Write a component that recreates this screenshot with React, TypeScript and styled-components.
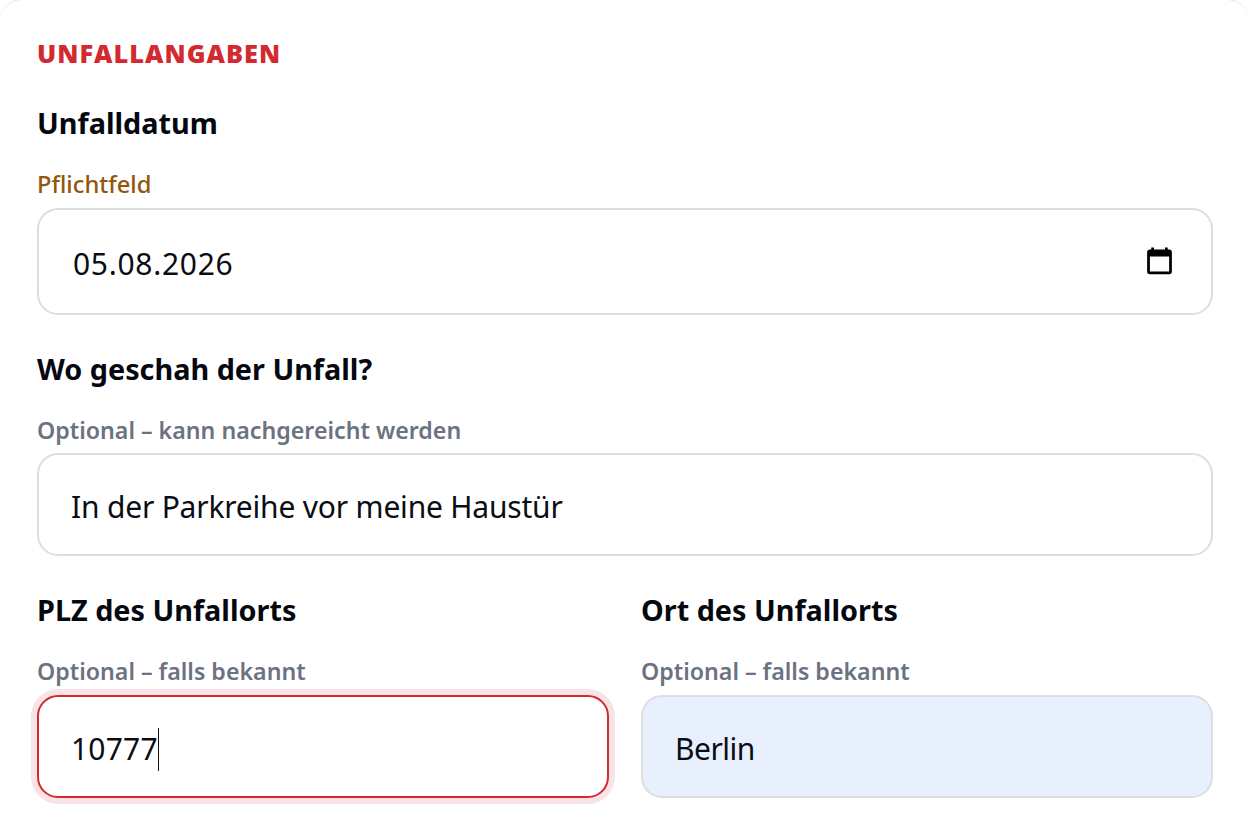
import React from "react";
import styled, { createGlobalStyle } from "styled-components";

const Global = createGlobalStyle`
  html, body { margin: 0; padding: 0; background: #fff; height: 817px; overflow: hidden; }
  body { font-family: "Noto Sans", "Open Sans", sans-serif; color: #000; }
`;

const Page = styled.div`
  height: 817px;
  overflow: hidden;
`;

const Card = styled.form`
  box-sizing: border-box;
  width: 1249px;
  margin-top: -1px;
  padding: 39px 36px 0 37px;
  background: #fff;
  border-top: 1px solid #e6e6e6;
  border-radius: 22px;
  display: flex;
  flex-direction: column;
`;

const Title = styled.h2`
  margin: 0;
  font-size: 25.4px;
  line-height: 28px;
  font-weight: 800;
  letter-spacing: 1px;
  color: #d32a2f;
  text-transform: uppercase;
  font-family: "Open Sans", sans-serif;
`;

const Field = styled.div<{ $top: number }>`
  display: flex;
  flex-direction: column;
  min-width: 0;
  margin-top: ${(p) => p.$top}px;
`;

const Label = styled.label`
  font-size: 28.8px;
  line-height: 36px;
  font-weight: 700;
  color: #05080f;
`;

const Hint = styled.span<{ $tone?: "required" | "optional"; $gap: number }>`
  margin-top: 29px;
  margin-bottom: ${(p) => p.$gap}px;
  font-size: ${(p) => (p.$tone === "required" ? 23.7 : 23.2)}px;
  line-height: 28px;
  font-weight: ${(p) => (p.$tone === "required" ? 500 : 600)};
  color: ${(p) => (p.$tone === "required" ? "#92570c" : "#6b7280")};
`;

const Box = styled.div<{ $h: number; $state?: "focus" | "autofill" }>`
  box-sizing: border-box;
  height: ${(p) => p.$h}px;
  padding: 5px 32px 0;
  display: flex;
  align-items: center;
  justify-content: space-between;
  border-radius: 21px;
  border: 2px solid ${(p) => (p.$state === "focus" ? "#d32a2f" : "#dcdee2")};
  background: ${(p) => (p.$state === "autofill" ? "#e8f0fe" : "#fff")};
  box-shadow: ${(p) => (p.$state === "focus" ? "0 0 0 6px #f8e4e5" : "none")};
  font-size: 30px;
  line-height: 40px;
  color: #0a0d14;
`;

const Value = styled.span<{ $kind?: "date" | "digits" | "short" }>`
  display: inline-flex;
  align-items: center;
  margin-left: ${(p) => (p.$kind === "date" ? 2 : 0)}px;
  letter-spacing: ${(p) =>
    p.$kind === "date" ? 0.7 : p.$kind === "digits" ? 0.2 : p.$kind === "short" ? -0.5 : -0.2}px;
`;

const Caret = styled.span`
  display: inline-block;
  width: 1px;
  height: 43px;
  background: #111;
`;

const CalendarIcon = styled.svg`
  width: 33px;
  height: 33px;
  margin-right: 3px;
  margin-top: -8px;
  flex: none;
`;

const Row = styled.div`
  display: grid;
  grid-template-columns: 1fr 1fr;
  column-gap: 32px;
`;

export default function App() {
  return (
    <Page>
      <Global />
      <Card>
        <Title>Unfallangaben</Title>
        <Field $top={38}>
          <Label>Unfalldatum</Label>
          <Hint $tone="required" $gap={10}>Pflichtfeld</Hint>
          <Box $h={107}>
            <Value $kind="date">05.08.2026</Value>
            <CalendarIcon viewBox="0 0 24 24" fill="#000" aria-hidden="true">
              <path d="M19 4h-1V2.5h-2V4H8V2.5H6V4H5a2 2 0 0 0-2 2v14a2 2 0 0 0 2 2h14a2 2 0 0 0 2-2V6a2 2 0 0 0-2-2zm0 16H5V9h14v11z" />
            </CalendarIcon>
          </Box>
        </Field>
        <Field $top={36}>
          <Label>Wo geschah der Unfall?</Label>
          <Hint $gap={9}>Optional – kann nachgereicht werden</Hint>
          <Box $h={103}>
            <Value>In der Parkreihe vor meine Haustür</Value>
          </Box>
        </Field>
        <Row>
          <Field $top={36}>
            <Label>PLZ des Unfallorts</Label>
            <Hint $gap={10}>Optional – falls bekannt</Hint>
            <Box $h={103} $state="focus">
              <Value $kind="digits">
                10777
                <Caret />
              </Value>
            </Box>
          </Field>
          <Field $top={36}>
            <Label>Ort des Unfallorts</Label>
            <Hint $gap={10}>Optional – falls bekannt</Hint>
            <Box $h={103} $state="autofill">
              <Value $kind="short">Berlin</Value>
            </Box>
          </Field>
        </Row>
      </Card>
    </Page>
  );
}
